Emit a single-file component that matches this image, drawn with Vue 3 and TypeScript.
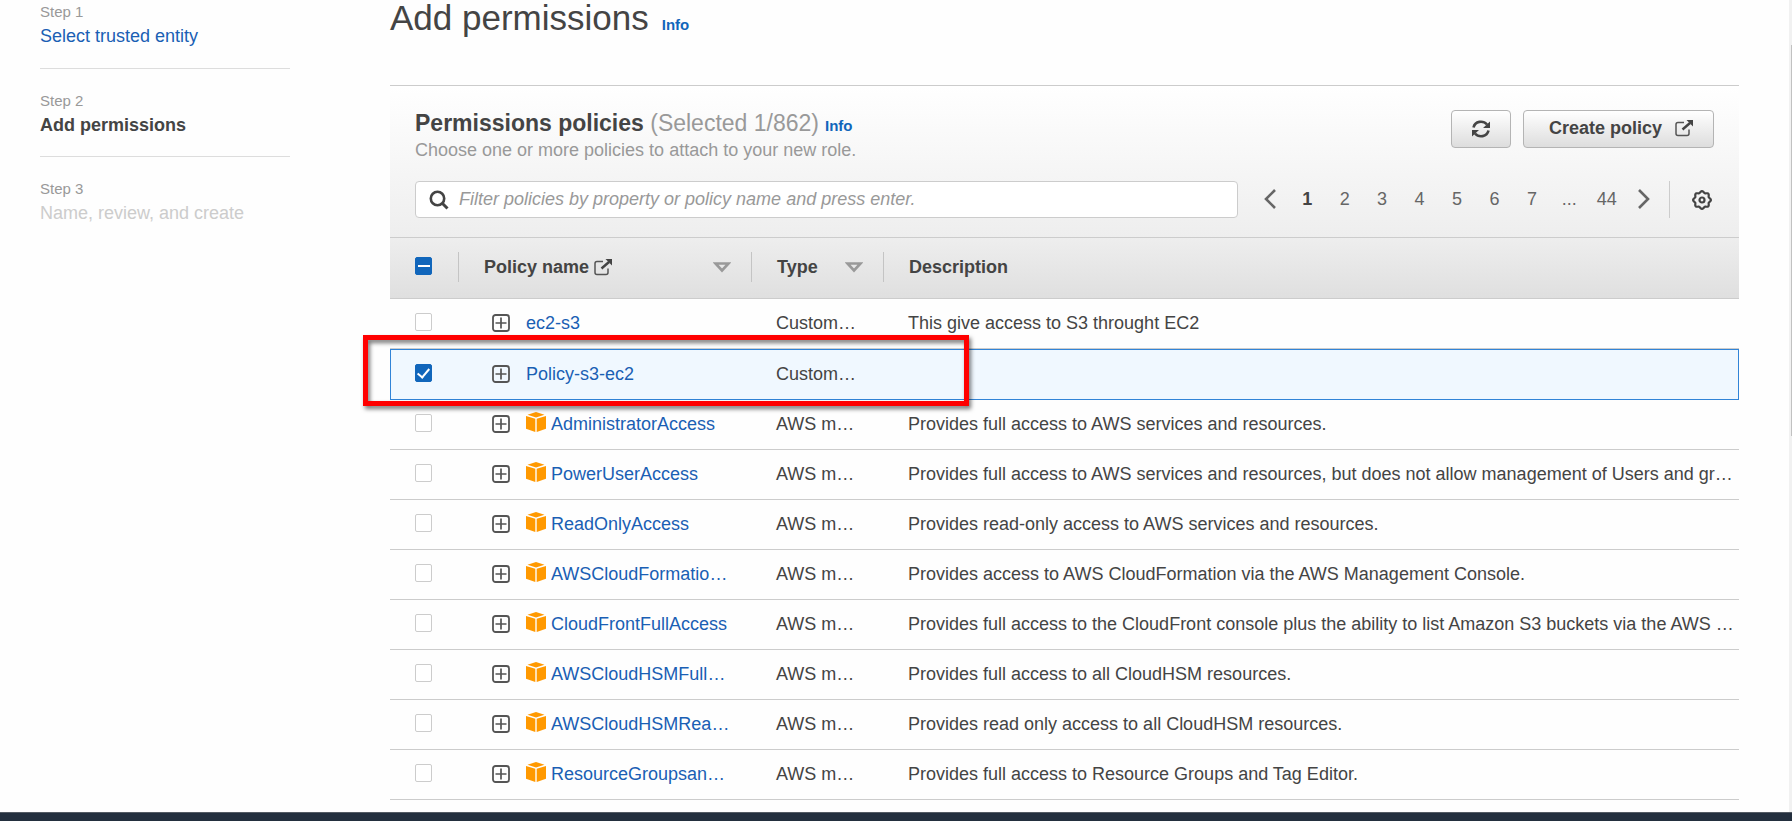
<script setup lang="ts">
import { ref, computed } from 'vue'

interface Step { label: string; name: string; state: 'link' | 'current' | 'disabled' }
interface Policy { name: string; type: string; description: string; managed: boolean }

const steps: Step[] = [
  { label: 'Step 1', name: 'Select trusted entity', state: 'link' },
  { label: 'Step 2', name: 'Add permissions', state: 'current' },
  { label: 'Step 3', name: 'Name, review, and create', state: 'disabled' },
]

const custom = (name: string, description: string): Policy => ({ name, type: 'Customer managed', description, managed: false })
const aws = (name: string, description: string): Policy => ({ name, type: 'AWS managed', description, managed: true })

const policies: Policy[] = [
  custom('ec2-s3', 'This give access to S3 throught EC2'),
  custom('Policy-s3-ec2', ''),
  aws('AdministratorAccess', 'Provides full access to AWS services and resources.'),
  aws('PowerUserAccess', 'Provides full access to AWS services and resources, but does not allow management of Users and groups.'),
  aws('ReadOnlyAccess', 'Provides read-only access to AWS services and resources.'),
  aws('AWSCloudFormationReadOnlyAccess', 'Provides access to AWS CloudFormation via the AWS Management Console.'),
  aws('CloudFrontFullAccess', 'Provides full access to the CloudFront console plus the ability to list Amazon S3 buckets via the AWS Management Console.'),
  aws('AWSCloudHSMFullAccess', 'Provides full access to all CloudHSM resources.'),
  aws('AWSCloudHSMReadOnlyAccess', 'Provides read only access to all CloudHSM resources.'),
  aws('ResourceGroupsandTagEditorFullAccess', 'Provides full access to Resource Groups and Tag Editor.'),
]

const selected = ref<string[]>(['Policy-s3-ec2'])
const someSelected = computed(() => selected.value.length > 0 && selected.value.length < policies.length)
const allSelected = computed(() => selected.value.length === policies.length)
const toggleAll = () => {
  selected.value = selected.value.length ? [] : policies.map((p) => p.name)
}

const filter = ref('')
const pages = ['1', '2', '3', '4', '5', '6', '7', '...', '44']
const page = ref('1')

// Scalloped outline of the preferences gear: eight rounded teeth round the centre.
const gearPath = (() => {
  const points: string[] = []
  for (let i = 0; i < 96; i++) {
    const a = (i / 96) * Math.PI * 2
    const r = 8.1 + 0.8 * Math.cos(8 * a)
    points.push(`${(10 + r * Math.cos(a)).toFixed(2)} ${(10 + r * Math.sin(a)).toFixed(2)}`)
  }
  return `M${points.join('L')}Z`
})()
</script>

<template>
  <div class="screen">
    <div class="body">
      <nav class="steps" aria-label="Steps">
        <ol>
          <li v-for="s in steps" :key="s.label">
            <span class="step-label">{{ s.label }}</span>
            <a v-if="s.state === 'link'" href="#" class="step-name">{{ s.name }}</a>
            <span v-else class="step-name" :class="s.state">{{ s.name }}</span>
          </li>
        </ol>
      </nav>

      <main class="main">
        <header class="title">
          <h1>Add permissions</h1>
          <a href="#" class="info">Info</a>
        </header>

        <section class="card">
          <div class="card-head">
            <div class="head-row">
              <div>
                <div class="head-title">
                  <h2>Permissions policies <span class="count">(Selected {{ selected.length }}/862)</span></h2>
                  <a href="#" class="info">Info</a>
                </div>
                <p>Choose one or more policies to attach to your new role.</p>
              </div>
              <div class="actions">
                <button type="button" class="btn refresh" aria-label="Refresh">
                  <svg width="18" height="18" viewBox="0 0 18 18">
                    <path d="M1.500 7.500C3 1 11 0 15 4.500M16.500 10.500C15 17 7 18 3 13.500" fill="none" stroke="#444" stroke-width="2.600" />
                    <path d="M18 1.500V8H11ZM0 16.500V10H7Z" fill="#444" />
                  </svg>
                </button>
                <button type="button" class="btn create">
                  Create policy
                  <svg width="18" height="18" viewBox="0 0 18 18">
                    <path d="M9 3.500H3Q1 3.500 1 5.500V14.500Q1 16.500 3 16.500H12Q14 16.500 14 14.500V10.500" fill="none" stroke="#555" stroke-width="1.500" />
                    <path d="M7.500 10.500L15 4" stroke="#444" stroke-width="2.400" />
                    <path d="M11.500 1H18V7.500Z" fill="#444" />
                  </svg>
                </button>
              </div>
            </div>

            <div class="tools">
              <label class="search">
                <svg width="20" height="20" viewBox="0 0 20 20">
                  <circle cx="8.500" cy="8.500" r="6.700" fill="none" stroke="#444" stroke-width="2.600" />
                  <path d="M13 13L18.500 18.500" stroke="#444" stroke-width="3" />
                </svg>
                <input v-model="filter" type="text" aria-label="Filter policies" placeholder="Filter policies by property or policy name and press enter." />
              </label>
              <div class="pager">
                <button type="button" aria-label="Previous page">
                  <svg width="12" height="20" viewBox="0 0 12 20"><path d="M11 1L2 10L11 19" fill="none" stroke="#666" stroke-width="2.600" /></svg>
                </button>
                <template v-for="p in pages" :key="p">
                  <span v-if="p === '...'">...</span>
                  <button v-else type="button" :class="{ active: p === page }" @click="page = p">{{ p }}</button>
                </template>
                <button type="button" aria-label="Next page">
                  <svg width="12" height="20" viewBox="0 0 12 20"><path d="M1 1L10 10L1 19" fill="none" stroke="#666" stroke-width="2.600" /></svg>
                </button>
              </div>
              <button type="button" class="gear" aria-label="Preferences">
                <svg width="20" height="20" viewBox="0 0 20 20">
                  <path :d="gearPath" fill="none" stroke="#444" stroke-width="2.200" />
                  <circle cx="10" cy="10" r="2.500" fill="none" stroke="#444" stroke-width="2.200" />
                </svg>
              </button>
            </div>
          </div>

          <table>
            <colgroup>
              <col class="c-check" /><col class="c-name" /><col class="c-type" /><col />
            </colgroup>
            <thead>
              <tr>
                <th class="check">
                  <input type="checkbox" aria-label="Select all policies" :checked="allSelected" :class="{ mixed: someSelected }" :indeterminate="someSelected" @change="toggleAll" />
                </th>
                <th>
                  <div class="th">
                    <span class="th-text">Policy name
                      <svg width="18" height="18" viewBox="0 0 18 18">
                        <path d="M9 3.500H3Q1 3.500 1 5.500V14.500Q1 16.500 3 16.500H12Q14 16.500 14 14.500V10.500" fill="none" stroke="#555" stroke-width="1.500" />
                        <path d="M7.500 10.500L15 4" stroke="#444" stroke-width="2.400" />
                        <path d="M11.500 1H18V7.500Z" fill="#444" />
                      </svg>
                    </span>
                    <button type="button" class="sort" aria-label="Sort by policy name">
                      <svg width="18" height="11" viewBox="0 0 18 11"><path d="M2.500 1.500H15.500L9 8.500Z" fill="none" stroke="#999" stroke-width="2.600" /></svg>
                    </button>
                  </div>
                </th>
                <th>
                  <div class="th">
                    <span class="th-text">Type</span>
                    <button type="button" class="sort" aria-label="Sort by type">
                      <svg width="18" height="11" viewBox="0 0 18 11"><path d="M2.500 1.500H15.500L9 8.500Z" fill="none" stroke="#999" stroke-width="2.600" /></svg>
                    </button>
                  </div>
                </th>
                <th><div class="th"><span class="th-text">Description</span></div></th>
              </tr>
            </thead>
            <tbody>
              <tr v-for="p in policies" :key="p.name" :class="{ selected: selected.includes(p.name) }">
                <td class="check"><input v-model="selected" type="checkbox" :value="p.name" :aria-label="p.name" /></td>
                <td>
                  <div class="name">
                    <button type="button" class="expand" :aria-label="'Expand ' + p.name">
                      <svg width="18" height="18" viewBox="0 0 18 18">
                        <rect x="1" y="1" width="16" height="16" rx="2.500" fill="none" stroke="#555" stroke-width="1.800" />
                        <path d="M3.500 9H14.500M9 3.500V14.500" stroke="#555" stroke-width="1.700" />
                      </svg>
                    </button>
                    <svg v-if="p.managed" class="cube" width="20" height="20" viewBox="0 0 20 20">
                      <path d="M10 0L18.500 2.700L10 5.400L1.500 2.700ZM0 4L9.300 6.800V20L0 16.800ZM20 4L10.700 6.800V20L20 16.800Z" fill="#f90" />
                    </svg>
                    <a href="#">{{ p.name }}</a>
                  </div>
                </td>
                <td class="text">{{ p.type }}</td>
                <td class="text description">{{ p.description }}</td>
              </tr>
            </tbody>
          </table>
          <div class="highlight" aria-hidden="true"></div>
        </section>
      </main>
      <div class="scrollbar" aria-hidden="true"><div class="thumb"></div></div>
    </div>
    <footer></footer>
  </div>
</template>

<style>
html, body { margin: 0; height: 100%; overflow: hidden; }
#app { height: 100%; }
</style>

<style scoped>
.screen {
  height: 100%;
  display: flex;
  flex-direction: column;
  background: #fefefe;
  color: #444;
  font: 18px/24px "Liberation Sans", Arial, sans-serif;
}
.screen * { box-sizing: border-box; }
.body { flex: 1; min-height: 0; display: flex; overflow: hidden; }
a { color: #1a5fb4; text-decoration: none; }
button { font: inherit; color: inherit; padding: 0; border: 0; background: none; cursor: pointer; }
svg { display: block; flex: none; }

.steps { flex: none; width: 390px; padding: 0 100px 0 40px; }
.steps ol { list-style: none; margin: 0; padding: 0; }
.steps li { padding: 20px 0; height: 88px; border-bottom: 1px solid #ddd; }
.steps li:first-child { padding-top: 0; height: 69px; }
.steps li:last-child { border: 0; }
.step-label { display: block; font-size: 15px; color: #999; }
.step-name { display: block; }
.current { font-weight: bold; }
.disabled { color: #ccc; }

.main { flex: 1; min-width: 0; padding-right: 50px; }
.title { display: flex; align-items: baseline; gap: 13px; height: 85px; }
h1 { margin: 0; font-size: 35px; line-height: 36px; font-weight: normal; }
.info { font-size: 15px; font-weight: bold; color: #1166bb; }

.card { position: relative; }
.card-head {
  height: 152px;
  padding: 24px 25px 0;
  border-top: 1px solid #ccc;
  background: linear-gradient(#fff, #eee);
}
.head-row { display: flex; justify-content: space-between; height: 71px; }
.head-title { display: flex; align-items: baseline; gap: 6px; }
h2 { margin: 0; font-size: 23px; line-height: 26px; }
.count { font-weight: normal; color: #999; }
p { margin: 0; color: #999; }
.actions { display: flex; gap: 12px; align-items: flex-start; }
.btn {
  height: 38px;
  display: flex;
  align-items: center;
  justify-content: center;
  border: 1px solid #b4b4b4;
  border-radius: 4px;
  background: linear-gradient(#fff, #ddd);
}
.refresh { width: 60px; }
.create { font-weight: bold; padding: 0 20px 2px 25px; gap: 13px; }

.tools { display: flex; align-items: center; height: 37px; }
.search {
  flex: 1;
  display: flex;
  align-items: center;
  gap: 10px;
  height: 37px;
  padding: 0 13px;
  border: 1px solid #ccc;
  border-radius: 4px;
  background: #fff;
}
.search input { flex: 1; min-width: 0; border: 0; outline: 0; padding: 0 0 2px; background: none; font: inherit; color: #444; }
.search input::placeholder { color: #999; opacity: 1; font-style: italic; }
.pager { display: grid; grid-template-columns: repeat(11, 1fr); width: 412px; margin: 0 6px 2px 13px; color: #666; }
.pager button, .pager span { display: flex; justify-content: center; align-items: center; }
.pager .active { font-weight: bold; color: #444; }
.gear { height: 37px; padding: 0 2px 0 22px; border-left: 1px solid #ccc; }

table { width: 100%; table-layout: fixed; border-collapse: separate; border-spacing: 0; }
.c-check { width: 68px; }
.c-name { width: 293px; }
.c-type { width: 132px; }
th { padding: 0 0 2px; height: 62px; text-align: left; border-top: 1px solid #ccc; border-bottom: 1px solid #ccc; }
thead tr { background: linear-gradient(#eee, #dfdfdf); }
.th { display: flex; align-items: center; justify-content: space-between; height: 30px; padding: 0 20px 0 25px; border-left: 1px solid #c4c4c4; }
.th-text { display: flex; align-items: center; gap: 5px; }

td { height: 50px; padding: 0 0 1px; border-bottom: 1px solid #ccc; }
.check { padding-left: 25px; }
.check input {
  appearance: none;
  display: block;
  width: 17px;
  height: 18px;
  margin: 0 0 2px;
  border: 1px solid #ccc;
  border-radius: 2px;
  background: #fff;
}
.check input:checked, .check input.mixed {
  border-color: #16b;
  background: #16b;
  display: grid;
  place-items: center;
}
.check input:checked::after { content: ""; width: 5px; height: 10px; border: solid #fff; border-width: 0 2px 2px 0; transform: rotate(40deg); margin-bottom: 3px; }
.check input.mixed::after { content: ""; width: 12px; height: 2px; background: #fff; }
.text { padding: 0 24px 2px 25px; overflow: hidden; white-space: nowrap; text-overflow: ellipsis; }
.description { padding-right: 4px; }
.name { display: flex; align-items: center; padding: 0 18px 0 34px; }
.expand { margin-right: 16px; }
.cube { margin: 0 5px 5px 0; }
.name a { min-width: 0; padding-bottom: 1px; overflow: hidden; white-space: nowrap; text-overflow: ellipsis; }
.selected td { height: 51px; background: #f0f8ff; border-top: 1px solid #3184d7; border-bottom-color: #3184d7; }
.selected td:first-child { border-left: 1px solid #3184d7; padding-left: 24px; }
.selected td:last-child { border-right: 1px solid #3184d7; }

.highlight {
  position: absolute;
  left: -27px;
  top: 250px;
  width: 606px;
  height: 71px;
  border: 5px solid #f00;
  filter: drop-shadow(2px 3px 2px #0008);
}
.scrollbar { flex: none; width: 3px; padding: 45px 0 0 2px; background: #f1f1f1; }
.thumb { height: 391px; background: #c1c1c1; }
footer { flex: none; height: 9px; background: #232f3e; border-top: 1px solid #545b64; }
</style>
